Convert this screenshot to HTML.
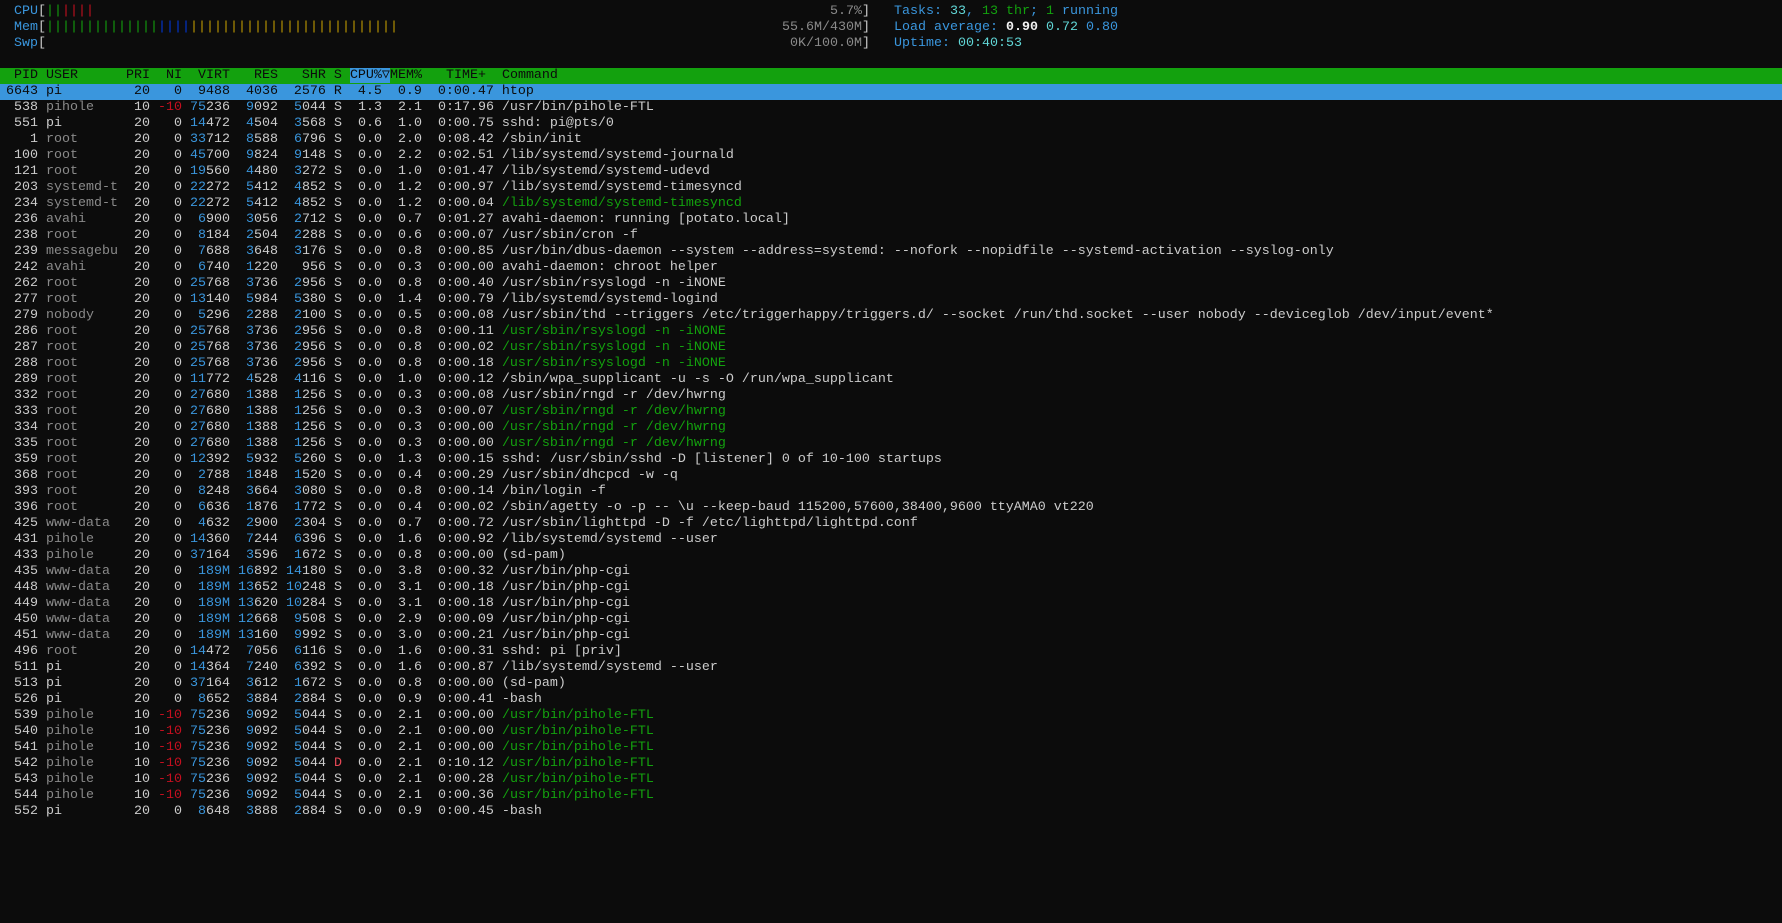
<!DOCTYPE html>
<html><head><meta charset="utf-8"><style>
html,body{margin:0;padding:0;background:#0c0c0c;width:1782px;height:919px;overflow:hidden}
body{font-family:"Liberation Mono","DejaVu Sans Mono",monospace;font-size:13.333px;line-height:16px;color:#cccccc;padding-top:4px;position:relative}
.l{height:16px;padding-left:6px;position:relative;white-space:pre;overflow:hidden}
i{font-style:normal;color:#3a96dd}
.g{color:#8a8a8a}.r{color:#c50f1f}.G{color:#13a10e}.D{color:#e74856}.c{color:#61d6d6}.w{color:#f2f2f2;font-weight:bold}.y{color:#c19c00}.bd{color:#0037da}.m{color:#8a8a8a}
.hdr{background:#13a10e;color:#0c0c0c}
.hdr span{background:#3a96dd}
.sel{background:#3a96dd;color:#0c0c0c}
.a{position:absolute;top:0}
</style></head><body>
<div class="l"><span class="a" style="left:14px"><i>CPU</i>[<span class="G">||</span><span class="r">||||</span></span><span class="a m" style="left:830px">5.7%</span><span class="a" style="left:862px">]</span><span class="a" style="left:894px"><i>Tasks: </i><span class="c">33</span><i>, </i><span class="G">13 thr</span><i>; </i><span class="G">1</span><i> running</i></span></div>
<div class="l"><span class="a" style="left:14px"><i>Mem</i>[<span class="G">||||||||||||||</span><span class="bd">||||</span><span class="y">||||||||||||||||||||||||||</span></span><span class="a m" style="left:782px">55.6M/430M</span><span class="a" style="left:862px">]</span><span class="a" style="left:894px"><i>Load average: </i><span class="w">0.90</span> <span class="c">0.72</span> <i>0.80</i></span></div>
<div class="l"><span class="a" style="left:14px"><i>Swp</i>[</span><span class="a m" style="left:790px">0K/100.0M</span><span class="a" style="left:862px">]</span><span class="a" style="left:894px"><i>Uptime: </i><span class="c">00:40:53</span></span></div>
<div class="l"></div>
<div class="l hdr"> PID USER      PRI  NI  VIRT   RES   SHR S <span>CPU%▽</span>MEM%   TIME+  Command</div>
<div class="l sel">6643 pi         20   0  9488  4036  2576 R  4.5  0.9  0:00.47 htop</div>
<div class="l"> 538 <span class="g">pihole   </span>  10 <span class="r">-10</span> <i>75</i>236  <i>9</i>092  <i>5</i>044 S  1.3  2.1  0:17.96 /usr/bin/pihole-FTL</div>
<div class="l"> 551 pi         20   0 <i>14</i>472  <i>4</i>504  <i>3</i>568 S  0.6  1.0  0:00.75 sshd: pi@pts/0</div>
<div class="l">   1 <span class="g">root     </span>  20   0 <i>33</i>712  <i>8</i>588  <i>6</i>796 S  0.0  2.0  0:08.42 /sbin/init</div>
<div class="l"> 100 <span class="g">root     </span>  20   0 <i>45</i>700  <i>9</i>824  <i>9</i>148 S  0.0  2.2  0:02.51 /lib/systemd/systemd-journald</div>
<div class="l"> 121 <span class="g">root     </span>  20   0 <i>19</i>560  <i>4</i>480  <i>3</i>272 S  0.0  1.0  0:01.47 /lib/systemd/systemd-udevd</div>
<div class="l"> 203 <span class="g">systemd-t</span>  20   0 <i>22</i>272  <i>5</i>412  <i>4</i>852 S  0.0  1.2  0:00.97 /lib/systemd/systemd-timesyncd</div>
<div class="l"> 234 <span class="g">systemd-t</span>  20   0 <i>22</i>272  <i>5</i>412  <i>4</i>852 S  0.0  1.2  0:00.04 <span class="G">/lib/systemd/systemd-timesyncd</span></div>
<div class="l"> 236 <span class="g">avahi    </span>  20   0  <i>6</i>900  <i>3</i>056  <i>2</i>712 S  0.0  0.7  0:01.27 avahi-daemon: running [potato.local]</div>
<div class="l"> 238 <span class="g">root     </span>  20   0  <i>8</i>184  <i>2</i>504  <i>2</i>288 S  0.0  0.6  0:00.07 /usr/sbin/cron -f</div>
<div class="l"> 239 <span class="g">messagebu</span>  20   0  <i>7</i>688  <i>3</i>648  <i>3</i>176 S  0.0  0.8  0:00.85 /usr/bin/dbus-daemon --system --address=systemd: --nofork --nopidfile --systemd-activation --syslog-only</div>
<div class="l"> 242 <span class="g">avahi    </span>  20   0  <i>6</i>740  <i>1</i>220   956 S  0.0  0.3  0:00.00 avahi-daemon: chroot helper</div>
<div class="l"> 262 <span class="g">root     </span>  20   0 <i>25</i>768  <i>3</i>736  <i>2</i>956 S  0.0  0.8  0:00.40 /usr/sbin/rsyslogd -n -iNONE</div>
<div class="l"> 277 <span class="g">root     </span>  20   0 <i>13</i>140  <i>5</i>984  <i>5</i>380 S  0.0  1.4  0:00.79 /lib/systemd/systemd-logind</div>
<div class="l"> 279 <span class="g">nobody   </span>  20   0  <i>5</i>296  <i>2</i>288  <i>2</i>100 S  0.0  0.5  0:00.08 /usr/sbin/thd --triggers /etc/triggerhappy/triggers.d/ --socket /run/thd.socket --user nobody --deviceglob /dev/input/event*</div>
<div class="l"> 286 <span class="g">root     </span>  20   0 <i>25</i>768  <i>3</i>736  <i>2</i>956 S  0.0  0.8  0:00.11 <span class="G">/usr/sbin/rsyslogd -n -iNONE</span></div>
<div class="l"> 287 <span class="g">root     </span>  20   0 <i>25</i>768  <i>3</i>736  <i>2</i>956 S  0.0  0.8  0:00.02 <span class="G">/usr/sbin/rsyslogd -n -iNONE</span></div>
<div class="l"> 288 <span class="g">root     </span>  20   0 <i>25</i>768  <i>3</i>736  <i>2</i>956 S  0.0  0.8  0:00.18 <span class="G">/usr/sbin/rsyslogd -n -iNONE</span></div>
<div class="l"> 289 <span class="g">root     </span>  20   0 <i>11</i>772  <i>4</i>528  <i>4</i>116 S  0.0  1.0  0:00.12 /sbin/wpa_supplicant -u -s -O /run/wpa_supplicant</div>
<div class="l"> 332 <span class="g">root     </span>  20   0 <i>27</i>680  <i>1</i>388  <i>1</i>256 S  0.0  0.3  0:00.08 /usr/sbin/rngd -r /dev/hwrng</div>
<div class="l"> 333 <span class="g">root     </span>  20   0 <i>27</i>680  <i>1</i>388  <i>1</i>256 S  0.0  0.3  0:00.07 <span class="G">/usr/sbin/rngd -r /dev/hwrng</span></div>
<div class="l"> 334 <span class="g">root     </span>  20   0 <i>27</i>680  <i>1</i>388  <i>1</i>256 S  0.0  0.3  0:00.00 <span class="G">/usr/sbin/rngd -r /dev/hwrng</span></div>
<div class="l"> 335 <span class="g">root     </span>  20   0 <i>27</i>680  <i>1</i>388  <i>1</i>256 S  0.0  0.3  0:00.00 <span class="G">/usr/sbin/rngd -r /dev/hwrng</span></div>
<div class="l"> 359 <span class="g">root     </span>  20   0 <i>12</i>392  <i>5</i>932  <i>5</i>260 S  0.0  1.3  0:00.15 sshd: /usr/sbin/sshd -D [listener] 0 of 10-100 startups</div>
<div class="l"> 368 <span class="g">root     </span>  20   0  <i>2</i>788  <i>1</i>848  <i>1</i>520 S  0.0  0.4  0:00.29 /usr/sbin/dhcpcd -w -q</div>
<div class="l"> 393 <span class="g">root     </span>  20   0  <i>8</i>248  <i>3</i>664  <i>3</i>080 S  0.0  0.8  0:00.14 /bin/login -f</div>
<div class="l"> 396 <span class="g">root     </span>  20   0  <i>6</i>636  <i>1</i>876  <i>1</i>772 S  0.0  0.4  0:00.02 /sbin/agetty -o -p -- \u --keep-baud 115200,57600,38400,9600 ttyAMA0 vt220</div>
<div class="l"> 425 <span class="g">www-data </span>  20   0  <i>4</i>632  <i>2</i>900  <i>2</i>304 S  0.0  0.7  0:00.72 /usr/sbin/lighttpd -D -f /etc/lighttpd/lighttpd.conf</div>
<div class="l"> 431 <span class="g">pihole   </span>  20   0 <i>14</i>360  <i>7</i>244  <i>6</i>396 S  0.0  1.6  0:00.92 /lib/systemd/systemd --user</div>
<div class="l"> 433 <span class="g">pihole   </span>  20   0 <i>37</i>164  <i>3</i>596  <i>1</i>672 S  0.0  0.8  0:00.00 (sd-pam)</div>
<div class="l"> 435 <span class="g">www-data </span>  20   0  <i>189M</i> <i>16</i>892 <i>14</i>180 S  0.0  3.8  0:00.32 /usr/bin/php-cgi</div>
<div class="l"> 448 <span class="g">www-data </span>  20   0  <i>189M</i> <i>13</i>652 <i>10</i>248 S  0.0  3.1  0:00.18 /usr/bin/php-cgi</div>
<div class="l"> 449 <span class="g">www-data </span>  20   0  <i>189M</i> <i>13</i>620 <i>10</i>284 S  0.0  3.1  0:00.18 /usr/bin/php-cgi</div>
<div class="l"> 450 <span class="g">www-data </span>  20   0  <i>189M</i> <i>12</i>668  <i>9</i>508 S  0.0  2.9  0:00.09 /usr/bin/php-cgi</div>
<div class="l"> 451 <span class="g">www-data </span>  20   0  <i>189M</i> <i>13</i>160  <i>9</i>992 S  0.0  3.0  0:00.21 /usr/bin/php-cgi</div>
<div class="l"> 496 <span class="g">root     </span>  20   0 <i>14</i>472  <i>7</i>056  <i>6</i>116 S  0.0  1.6  0:00.31 sshd: pi [priv]</div>
<div class="l"> 511 pi         20   0 <i>14</i>364  <i>7</i>240  <i>6</i>392 S  0.0  1.6  0:00.87 /lib/systemd/systemd --user</div>
<div class="l"> 513 pi         20   0 <i>37</i>164  <i>3</i>612  <i>1</i>672 S  0.0  0.8  0:00.00 (sd-pam)</div>
<div class="l"> 526 pi         20   0  <i>8</i>652  <i>3</i>884  <i>2</i>884 S  0.0  0.9  0:00.41 -bash</div>
<div class="l"> 539 <span class="g">pihole   </span>  10 <span class="r">-10</span> <i>75</i>236  <i>9</i>092  <i>5</i>044 S  0.0  2.1  0:00.00 <span class="G">/usr/bin/pihole-FTL</span></div>
<div class="l"> 540 <span class="g">pihole   </span>  10 <span class="r">-10</span> <i>75</i>236  <i>9</i>092  <i>5</i>044 S  0.0  2.1  0:00.00 <span class="G">/usr/bin/pihole-FTL</span></div>
<div class="l"> 541 <span class="g">pihole   </span>  10 <span class="r">-10</span> <i>75</i>236  <i>9</i>092  <i>5</i>044 S  0.0  2.1  0:00.00 <span class="G">/usr/bin/pihole-FTL</span></div>
<div class="l"> 542 <span class="g">pihole   </span>  10 <span class="r">-10</span> <i>75</i>236  <i>9</i>092  <i>5</i>044 <span class="D">D</span>  0.0  2.1  0:10.12 <span class="G">/usr/bin/pihole-FTL</span></div>
<div class="l"> 543 <span class="g">pihole   </span>  10 <span class="r">-10</span> <i>75</i>236  <i>9</i>092  <i>5</i>044 S  0.0  2.1  0:00.28 <span class="G">/usr/bin/pihole-FTL</span></div>
<div class="l"> 544 <span class="g">pihole   </span>  10 <span class="r">-10</span> <i>75</i>236  <i>9</i>092  <i>5</i>044 S  0.0  2.1  0:00.36 <span class="G">/usr/bin/pihole-FTL</span></div>
<div class="l"> 552 pi         20   0  <i>8</i>648  <i>3</i>888  <i>2</i>884 S  0.0  0.9  0:00.45 -bash</div>
</body></html>
